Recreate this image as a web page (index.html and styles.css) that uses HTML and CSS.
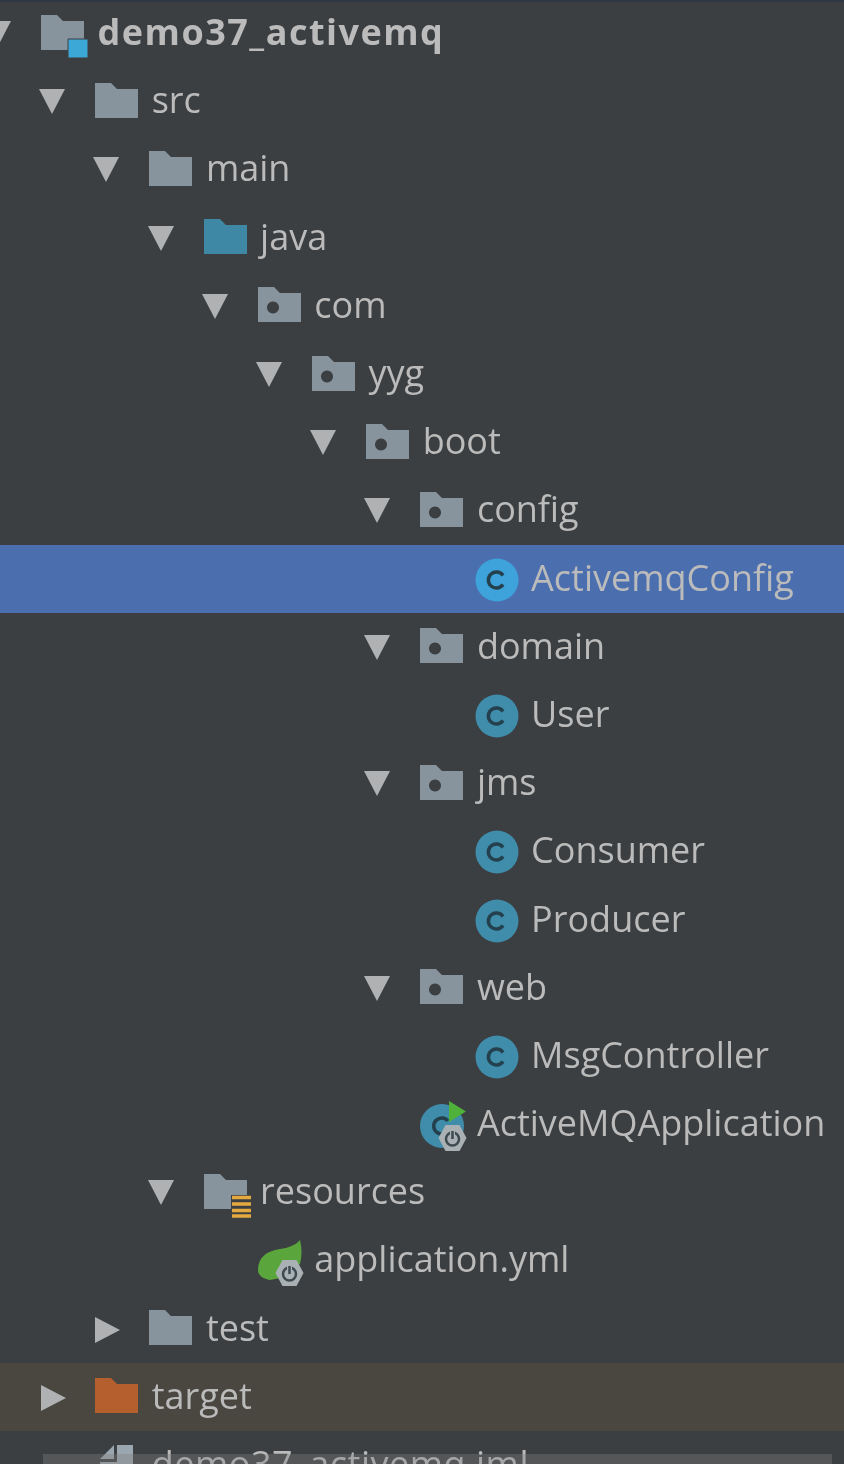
FILE: index.html
```html
<!DOCTYPE html>
<html lang="en">
<head>
    <meta charset="UTF-8">
    <meta name="viewport" content="width=device-width, initial-scale=1.0">
    <title>Project tree</title>
    <link rel="stylesheet" href="styles.css">
</head>
<body>
    <svg class="defs" width="0" height="0">
        <symbol id="open" viewBox="0 0 26 26"><path d="M0 0H26L13 25Z"/></symbol>
        <symbol id="closed" viewBox="0 0 26 26"><path d="M0 0L25 13L0 26Z"/></symbol>
        <symbol id="folder" viewBox="0 0 43 35"><path d="M0 0H16L22 6H43V35H0Z"/></symbol>
        <symbol id="package" viewBox="0 0 43 35"><path fill-rule="evenodd" d="M0 0H16L22 6H43V35H0ZM15 14.500a6 6 0 1 0 .01 0Z"/></symbol>
        <symbol id="class" viewBox="0 0 44 44">
            <circle cx="22" cy="22" r="21.500" fill="currentColor"/>
            <path d="M28 17.500A8 8 0 1 0 28 26.500" fill="none" stroke="#24404d" stroke-width="3.500"/>
        </symbol>
        <symbol id="badge" viewBox="0 0 30 28">
            <path d="M8 1H22L29 14L22 27H8L1 14Z" fill="#a9b1b5"/>
            <circle cx="15" cy="15" r="6.500" fill="none" stroke="#3e4a50" stroke-width="2.500"/>
            <path d="M15 6V15" stroke="#a9b1b5" stroke-width="5"/>
            <path d="M15 7V15" stroke="#3e4a50" stroke-width="2.500"/>
        </symbol>
    </svg>

    <div class="tree">
        <div class="row l0 bold">
            <span class="arrow"><svg><use href="#open"/></svg></span>
            <svg class="icon icon-tall folder-grey" viewBox="0 0 48 44">
                <path d="M0 0H16L22 6H43V35H0Z"/>
                <path d="M27 24H47V43H27Z" fill="#3ca8d8" stroke="#3c3f41" stroke-width="1"/>
            </svg>
            <span class="label">demo37_activemq</span>
        </div>
        <div class="row l1">
            <span class="arrow"><svg><use href="#open"/></svg></span>
            <svg class="icon folder-grey"><use href="#folder"/></svg>
            <span class="label">src</span>
        </div>
        <div class="row l2">
            <span class="arrow"><svg><use href="#open"/></svg></span>
            <svg class="icon folder-grey"><use href="#folder"/></svg>
            <span class="label">main</span>
        </div>
        <div class="row l3">
            <span class="arrow"><svg><use href="#open"/></svg></span>
            <svg class="icon folder-blue"><use href="#folder"/></svg>
            <span class="label">java</span>
        </div>
        <div class="row l4">
            <span class="arrow"><svg><use href="#open"/></svg></span>
            <svg class="icon folder-grey"><use href="#package"/></svg>
            <span class="label">com</span>
        </div>
        <div class="row l5">
            <span class="arrow"><svg><use href="#open"/></svg></span>
            <svg class="icon folder-grey"><use href="#package"/></svg>
            <span class="label">yyg</span>
        </div>
        <div class="row l6">
            <span class="arrow"><svg><use href="#open"/></svg></span>
            <svg class="icon folder-grey"><use href="#package"/></svg>
            <span class="label">boot</span>
        </div>
        <div class="row l7">
            <span class="arrow"><svg><use href="#open"/></svg></span>
            <svg class="icon folder-grey"><use href="#package"/></svg>
            <span class="label">config</span>
        </div>
        <div class="row l8 selected">
            <span class="arrow"></span>
            <svg class="icon icon-class"><use href="#class"/></svg>
            <span class="label">ActivemqConfig</span>
        </div>
        <div class="row l7">
            <span class="arrow"><svg><use href="#open"/></svg></span>
            <svg class="icon folder-grey"><use href="#package"/></svg>
            <span class="label">domain</span>
        </div>
        <div class="row l8">
            <span class="arrow"></span>
            <svg class="icon icon-class"><use href="#class"/></svg>
            <span class="label">User</span>
        </div>
        <div class="row l7">
            <span class="arrow"><svg><use href="#open"/></svg></span>
            <svg class="icon folder-grey"><use href="#package"/></svg>
            <span class="label">jms</span>
        </div>
        <div class="row l8">
            <span class="arrow"></span>
            <svg class="icon icon-class"><use href="#class"/></svg>
            <span class="label">Consumer</span>
        </div>
        <div class="row l8">
            <span class="arrow"></span>
            <svg class="icon icon-class"><use href="#class"/></svg>
            <span class="label">Producer</span>
        </div>
        <div class="row l7">
            <span class="arrow"><svg><use href="#open"/></svg></span>
            <svg class="icon folder-grey"><use href="#package"/></svg>
            <span class="label">web</span>
        </div>
        <div class="row l8">
            <span class="arrow"></span>
            <svg class="icon icon-class"><use href="#class"/></svg>
            <span class="label">MsgController</span>
        </div>
        <div class="row l7">
            <span class="arrow"></span>
            <svg class="icon icon-tall" viewBox="0 0 48 44">
                <circle cx="22" cy="20" r="22" fill="#3f8cab"/>
                <path d="M28 15A8 8 0 1 0 28 25" fill="none" stroke="#24404d" stroke-width="3.500"/>
                <path d="M29 -5L46 5.500L29 16Z" fill="#4fb03a"/>
                <use href="#badge" x="17" y="18" width="31" height="28"/>
            </svg>
            <span class="label">ActiveMQApplication</span>
        </div>
        <div class="row l3">
            <span class="arrow"><svg><use href="#open"/></svg></span>
            <svg class="icon icon-tall folder-grey" viewBox="0 0 48 44">
                <path d="M0 0H16L22 6H43V21H27V35H0Z"/>
                <path d="M28 23.500H47M28 30H47M28 36.500H47M28 42H47" stroke="#e3a93f" stroke-width="3.500" fill="none"/>
            </svg>
            <span class="label">resources</span>
        </div>
        <div class="row l4">
            <span class="arrow"></span>
            <svg class="icon icon-tall" viewBox="0 0 48 44">
                <path d="M42 -2C44 6 44 14 42 22L22 36L12 38C6 37 0 34 0 28C0 16 8 9 22 7C30 6 38 3 42 -2Z" fill="#5aa63c"/>
                <use href="#badge" x="16" y="17" width="31" height="28"/>
            </svg>
            <span class="label">application.yml</span>
        </div>
        <div class="row l2">
            <span class="arrow arrow-closed"><svg><use href="#closed"/></svg></span>
            <svg class="icon folder-grey"><use href="#folder"/></svg>
            <span class="label">test</span>
        </div>
        <div class="row l1 excluded">
            <span class="arrow arrow-closed"><svg><use href="#closed"/></svg></span>
            <svg class="icon folder-orange"><use href="#folder"/></svg>
            <span class="label">target</span>
        </div>
        <div class="row l1 file">
            <span class="arrow"></span>
            <svg class="icon file-icon" viewBox="0 0 43 35"><path d="M19 -2V12H5ZM22 -2H38V35H5V15H22Z"/></svg>
            <span class="label">demo37_activemq.iml</span>
        </div>
    </div>

    <div class="scrollbar"></div>
</body>
</html>
```

FILE: styles.css
```css
* { margin: 0; padding: 0; box-sizing: border-box; }
html, body { height: 1464px; overflow: hidden; }
body { background: #3c3f41; color: #bbb; font-family: 'Open Sans', sans-serif; position: relative; }
body::before { content: ""; position: absolute; left: 0; top: 0; width: 100%; height: 2px; background: #2f3644; }

.defs { position: absolute; }

/* the reference is an upscaled capture, so everything is a little soft */
.tree { margin-top: -1px; filter: blur(0.5px); }

.row { display: flex; align-items: center; height: 68.2px; font-size: 36px; white-space: nowrap; }
.l0 { padding-left: 0; }
.l1 { padding-left: 54.2px; }
.l2 { padding-left: 108.4px; }
.l3 { padding-left: 162.6px; }
.l4 { padding-left: 216.8px; }
.l5 { padding-left: 271px; }
.l6 { padding-left: 325.2px; }
.l7 { padding-left: 379.4px; }
.l8 { padding-left: 433.6px; }

.label { margin-bottom: 3px; }
.bold { font-weight: 700; letter-spacing: 1.5px; }
.file { letter-spacing: 0.5px; }
.selected { background: #4b6eaf; }
.excluded { background: #4a4740; }

.arrow { flex: none; width: 41px; height: 26px; margin-top: 2px; display: flex; justify-content: flex-end; }
.arrow svg { flex: none; width: 26px; height: 26px; margin-right: 30px; fill: #afb1b3; }
.arrow-closed svg { margin-right: 28px; }

.icon { flex: none; width: 43px; height: 35px; margin-right: 13.5px; overflow: visible; position: relative; top: -1px; }
.icon-tall { width: 48px; height: 44px; margin-right: 8.5px; top: 4px; }
.icon-class { width: 44px; height: 44px; margin-right: 12.5px; top: 1px; color: #3f8cab; }
.selected .icon-class { color: #3ea3db; }

.folder-grey { fill: #87939d; }
.folder-blue { fill: #3f88a5; }
.folder-orange { fill: #b55f2e; }
.file-icon { fill: #9aa7b0; }

.scrollbar { position: absolute; left: 43px; top: 1454px; width: 789px; height: 10px; background: rgba(128, 128, 128, 0.35); }
```
